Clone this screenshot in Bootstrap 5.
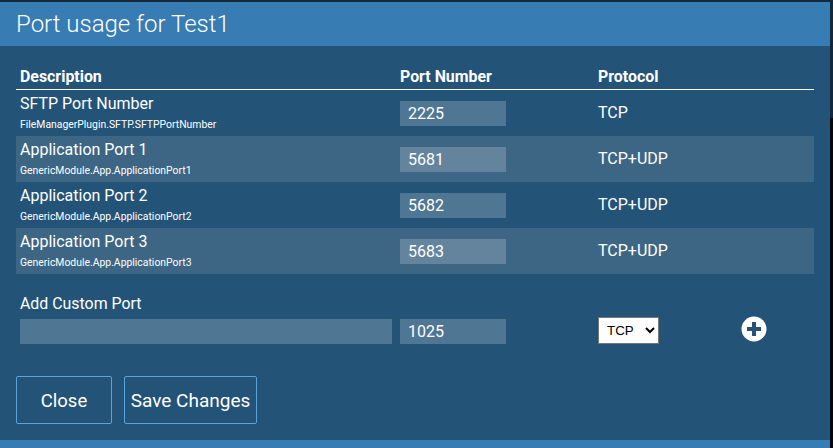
<!DOCTYPE html>
<html lang="en">
<head>
<meta charset="utf-8">
<link href="https://cdn.jsdelivr.net/npm/bootstrap@5.3.0/dist/css/bootstrap.min.css" rel="stylesheet">
<style>
html, body { height: 100%; margin: 0; overflow: hidden; }
html { background: #05070a; }
body { background: linear-gradient(#14283c 118px, #05070a 118px); font-family: Roboto, sans-serif; color: #fff; padding: 2px 3px 0 0; }
.dlg { width: 830px; height: 446px; background: #235478; display: flex; flex-direction: column; }
.dlg-head { height: 44px; background: #377cb3; padding-left: 16px; font-size: 24px; font-weight: 300; line-height: 45px; flex: none; }
.dlg-body { flex: 1; padding: 19px 16px 0; }
.dlg-foot { height: 8px; background: #377cb3; flex: none; }
.cols { display: grid; grid-template-columns: 380px 198px 1fr; }
.head-row { height: 25px; border-bottom: 1px solid #fff; font-size: 15.9px; font-weight: 700; line-height: 24px; padding-left: 4px; }
.port-row { height: 46px; align-items: start; padding-left: 4px; }
.port-row.odd { background: #3c6684; }
.name { font-size: 16px; line-height: 20px; padding-top: 4px; }
.key { font-size: 10.4px; line-height: 14px; margin-top: 4px; }
.fld { display: block; width: 106px; height: 25px; margin-top: 11px; border: 0; border-radius: 0; background: rgba(255,255,255,.2); color: #fff; font: 400 16px/25px Roboto, sans-serif; padding: 0 8px; outline: 0; }
.proto { font-size: 16px; line-height: 20px; padding-top: 13px; }
.add-title { font-size: 15.9px; line-height: 20px; margin: 20px 0 0 4px; }
.add-row { margin-top: 5px; padding-left: 4px; height: 27px; }
.add-row .fld { margin-top: 0; }
.fld-wide { width: 372px; }
.sel-cell { display: flex; align-items: flex-start; justify-content: space-between; width: 169px; margin-top: -3px; }
.proto-sel { width: 61px; height: 27px; margin-top: 1px; background: #fff; color: #000; border: 1px solid #767676; border-radius: 0; font: 400 13.33px "Liberation Sans", sans-serif; padding-left: 4px; }
.plus { width: 26px; height: 26px; display: block; }
.act-row { margin-top: 30px; gap: 12px; }
.act { height: 48px; border: 1px solid #5ba3dc; border-radius: 2px; background: transparent; color: #fff; font-size: 19px; font-weight: 400; padding: 2px 0 0; }
.act-close { width: 96px; font-size: 18.5px; padding-top: 4px; }
.act-save { width: 133px; }
</style>
</head>
<body>
<div class="dlg">
  <div class="dlg-head">Port usage for Test1</div>
  <div class="dlg-body">
    <div class="cols head-row"><div>Description</div><div>Port Number</div><div>Protocol</div></div>
    <div class="cols port-row">
      <div><div class="name">SFTP Port Number</div><div class="key">FileManagerPlugin.SFTP.SFTPPortNumber</div></div>
      <div><input class="fld" value="2225"></div><div class="proto">TCP</div>
    </div>
    <div class="cols port-row odd">
      <div><div class="name">Application Port 1</div><div class="key">GenericModule.App.ApplicationPort1</div></div>
      <div><input class="fld" value="5681"></div><div class="proto">TCP+UDP</div>
    </div>
    <div class="cols port-row">
      <div><div class="name">Application Port 2</div><div class="key">GenericModule.App.ApplicationPort2</div></div>
      <div><input class="fld" value="5682"></div><div class="proto">TCP+UDP</div>
    </div>
    <div class="cols port-row odd">
      <div><div class="name">Application Port 3</div><div class="key">GenericModule.App.ApplicationPort3</div></div>
      <div><input class="fld" value="5683"></div><div class="proto">TCP+UDP</div>
    </div>
    <div class="add-title">Add Custom Port</div>
    <div class="cols add-row">
      <div><input class="fld fld-wide" value=""></div>
      <div><input class="fld" value="1025"></div>
      <div class="sel-cell">
        <select class="proto-sel"><option>TCP</option><option>UDP</option></select>
        <svg class="plus" viewBox="0 0 26 26"><circle cx="13" cy="13" r="12.5" fill="#fff"/><path d="M11 6h4v5h5v4h-5v5h-4v-5H6v-4h5z" fill="#235478"/></svg>
      </div>
    </div>
    <div class="d-flex act-row">
      <button class="btn act act-close">Close</button>
      <button class="btn act act-save">Save Changes</button>
    </div>
  </div>
  <div class="dlg-foot"></div>
</div>
<script src="https://cdn.jsdelivr.net/npm/bootstrap@5.3.0/dist/js/bootstrap.bundle.min.js"></script>
</body>
</html>
